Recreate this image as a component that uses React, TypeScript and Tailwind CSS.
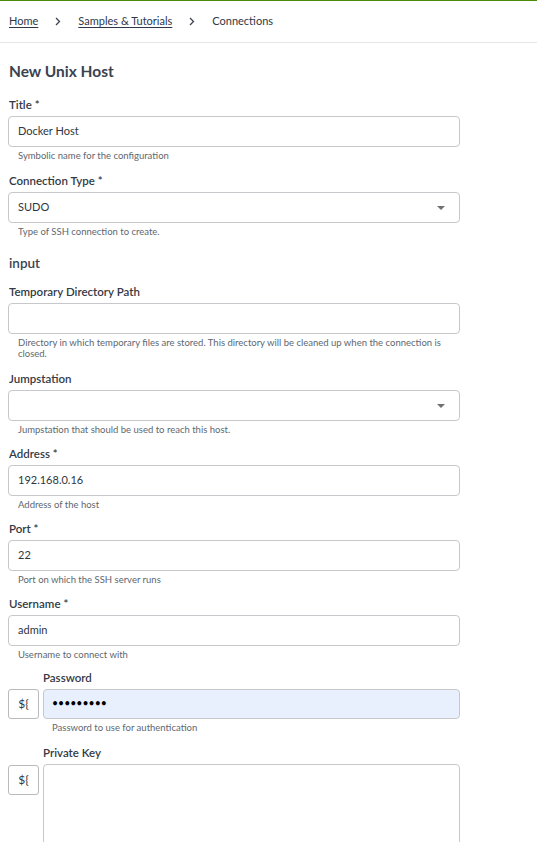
import React from "react";

const Chevron = () => (
  <svg width="6" height="9" viewBox="0 0 6 9" className="shrink-0">
    <path d="M1 1 L4.5 4.5 L1 8" fill="none" stroke="#3a4352" strokeWidth="1.3" />
  </svg>
);

const Arrow = () => (
  <svg width="8" height="4" viewBox="0 0 8 4" className="absolute right-[14px] top-[13px]">
    <path d="M0 0 H8 L4 4 Z" fill="#707070" />
  </svg>
);

function Field({
  label,
  required,
  value,
  help,
  select,
  mb = "mb-[11px]",
}: {
  label: string;
  required?: boolean;
  value?: string;
  help: React.ReactNode;
  select?: boolean;
  mb?: string;
}) {
  return (
    <div className={`${mb} w-[452px]`}>
      <div className="text-[11.5px] font-semibold leading-[16px] text-[#333a45] mb-[3px] pl-[1px]">
        {label}
        {required ? " *" : ""}
      </div>
      <div className="relative w-[452px] h-[31px] border border-[#c6c8cc] rounded-[4px] bg-white flex items-center px-[9px] text-[11px] text-[#2f3640]">
        {value}
        {select && <Arrow />}
      </div>
      <div className="mt-[3px] pl-[10px] text-[9.5px] leading-[11px] text-[#606770] whitespace-nowrap">{help}</div>
    </div>
  );
}

export default function App() {
  return (
    <div className="w-[537px] min-h-[842px] bg-white overflow-hidden" style={{ fontFamily: "Lato, 'Open Sans', sans-serif" }}>
      <div className="h-[1px] bg-[#4b8a06]" />
      <div className="h-[42px] border-b border-[#e6e6e6] flex items-center pl-[9px] gap-[17px] text-[11px] text-[#2e3848]">
        <span className="underline underline-offset-[2px]">Home</span>
        <Chevron />
        <span className="underline underline-offset-[2px]">Samples &amp; Tutorials</span>
        <Chevron />
        <span>Connections</span>
      </div>
      <div className="pl-[8px]">
        <div className="mt-[18px] mb-[16px] pl-[1px] text-[15.5px] leading-[20px] font-bold text-[#3a4350]">New Unix Host</div>
        <Field label="Title" required value="Docker Host" help="Symbolic name for the configuration" mb="mb-[12px]" />
        <Field label="Connection Type" required value="SUDO" select help="Type of SSH connection to create." />
        <div className="mt-[17px] mb-[12px] pl-[1px] text-[13.5px] leading-[18px] font-semibold text-[#3a4350]">input</div>
        <Field
          label="Temporary Directory Path"
          help={
            <>
              Directory in which temporary files are stored. This directory will be cleaned up when the connection is
              <br />
              closed.
            </>
          }
          mb="mb-[12px]"
        />
        <Field label="Jumpstation" select help="Jumpstation that should be used to reach this host." />
        <Field label="Address" required value="192.168.0.16" help="Address of the host" />
        <Field label="Port" required value="22" help="Port on which the SSH server runs" />
        <Field label="Username" required value="admin" help="Username to connect with" mb="mb-[10px]" />

        <div className="mb-[12px]">
          <div className="pl-[35px] text-[11.5px] font-semibold leading-[16px] text-[#333a45] mb-[3px]">Password</div>
          <div className="flex gap-[4px]">
            <div className="w-[31px] h-[30px] border border-[#b8babd] rounded-[3px] bg-white flex items-center justify-center text-[12px] text-[#2f3640]">
              ${"{"}
            </div>
            <div className="w-[417px] h-[30px] border border-[#c6c8cc] rounded-[4px] bg-[#e8f0fe] flex items-center px-[8px] text-[10.5px] text-black">
              •••••••••
            </div>
          </div>
          <div className="mt-[3px] pl-[44px] text-[9.5px] leading-[11px] text-[#606770]">Password to use for authentication</div>
        </div>

        <div>
          <div className="pl-[35px] text-[11.5px] font-semibold leading-[16px] text-[#333a45] mb-[3px]">Private Key</div>
          <div className="flex gap-[4px] items-start">
            <div className="mt-[1px] w-[31px] h-[30px] border border-[#b8babd] rounded-[3px] bg-white flex items-center justify-center text-[12px] text-[#2f3640]">
              ${"{"}
            </div>
            <div className="w-[417px] h-[100px] border border-[#c6c8cc] rounded-[4px] bg-white" />
          </div>
        </div>
      </div>
    </div>
  );
}
